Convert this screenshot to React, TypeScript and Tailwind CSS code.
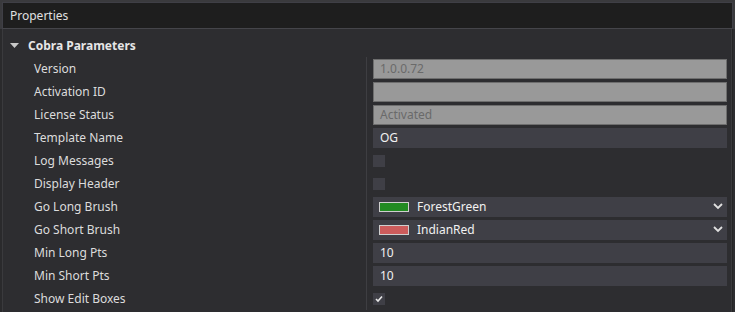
import React from 'react';

type Row =
  | { label: string; kind: 'disabled'; value: string }
  | { label: string; kind: 'text'; value: string }
  | { label: string; kind: 'check'; checked: boolean }
  | { label: string; kind: 'brush'; value: string; swatch: string };

const rows: Row[] = [
  { label: 'Version', kind: 'disabled', value: '1.0.0.72' },
  { label: 'Activation ID', kind: 'disabled', value: '' },
  { label: 'License Status', kind: 'disabled', value: 'Activated' },
  { label: 'Template Name', kind: 'text', value: 'OG' },
  { label: 'Log Messages', kind: 'check', checked: false },
  { label: 'Display Header', kind: 'check', checked: false },
  { label: 'Go Long Brush', kind: 'brush', value: 'ForestGreen', swatch: 'bg-[#228b22]' },
  { label: 'Go Short Brush', kind: 'brush', value: 'IndianRed', swatch: 'bg-[#cd5c5c]' },
  { label: 'Min Long Pts', kind: 'text', value: '10' },
  { label: 'Min Short Pts', kind: 'text', value: '10' },
  { label: 'Show Edit Boxes', kind: 'check', checked: true },
];

function Value({ row }: { row: Row }) {
  if (row.kind === 'disabled') {
    return (
      <div className="h-[20px] w-full border border-[#6e6e6e] bg-[#999999] pl-[6px] flex items-center text-[#6a6a6a]">
        {row.value}
      </div>
    );
  }
  if (row.kind === 'text') {
    return (
      <div className="h-[20px] w-full bg-[#3f3f46] pl-[7px] flex items-center text-[#f1f1f1]">
        {row.value}
      </div>
    );
  }
  if (row.kind === 'check') {
    return (
      <div className="w-[12px] h-[12px] bg-[#3f3f46] flex items-center justify-center">
        {row.checked && (
          <svg width="8" height="8" viewBox="0 0 8 8">
            <path d="M1 4 L3 6 L7 1.5" fill="none" stroke="#e8e8e8" strokeWidth="1.6" />
          </svg>
        )}
      </div>
    );
  }
  return (
    <div className="h-[20px] w-full bg-[#3f3f46] pl-[6px] pr-[4px] flex items-center text-[#f1f1f1]">
      <div className={`w-[30px] h-[10px] border border-[#cfcfcf] ${row.swatch}`} />
      <span className="ml-[8px] flex-1">{row.value}</span>
      <svg width="10" height="7" viewBox="0 0 10 7">
        <path d="M1 1 L5 5 L9 1" fill="none" stroke="#e0e0e0" strokeWidth="1.8" />
      </svg>
    </div>
  );
}

export default function App() {
  return (
    <div
      className="w-[735px] h-[312px] overflow-hidden bg-[#2d2d30] text-[12px] text-[#dcdcdc] flex flex-col"
      style={{ fontFamily: '"Noto Sans", "Open Sans", sans-serif' }}
    >
      {/* header */}
      <div className="bg-[#3a3a3d] pt-[2px] pl-[2px] pr-[2px]">
        <div className="h-[27px] bg-[#1e1e1e] border border-[#3f3f46] border-b-[#45454a] flex items-center pl-[7px] text-[#e0e0e0]">
          Properties
        </div>
      </div>

      <div className="flex-1 flex pr-[2px]">
        <div className="w-[3px] bg-[#2a2a2c] border-r border-[#3a3a3d]" />
        <div className="flex-1 bg-[#2d2d30] pt-[5px] border-r border-[#3a3a3d]">
          <div className="h-[23px] flex items-center pl-[7px]">
            <svg width="9" height="5" viewBox="0 0 9 5">
              <path d="M0 0 L9 0 L4.5 5 Z" fill="#c8c8c8" />
            </svg>
            <span className="ml-[9px] font-bold text-[#e6e6e6]">Cobra Parameters</span>
          </div>
          {rows.map((row) => (
            <div key={row.label} className="h-[23px] flex">
              <div className="w-[364px] flex items-center pl-[31px] border-r border-[#3e3e42]">{row.label}</div>
              <div className="flex-1 flex items-center pl-[6px] pr-[4px]">
                <Value row={row} />
              </div>
            </div>
          ))}
        </div>
        <div className="w-[1px] bg-[#252526]" />
      </div>
    </div>
  );
}
